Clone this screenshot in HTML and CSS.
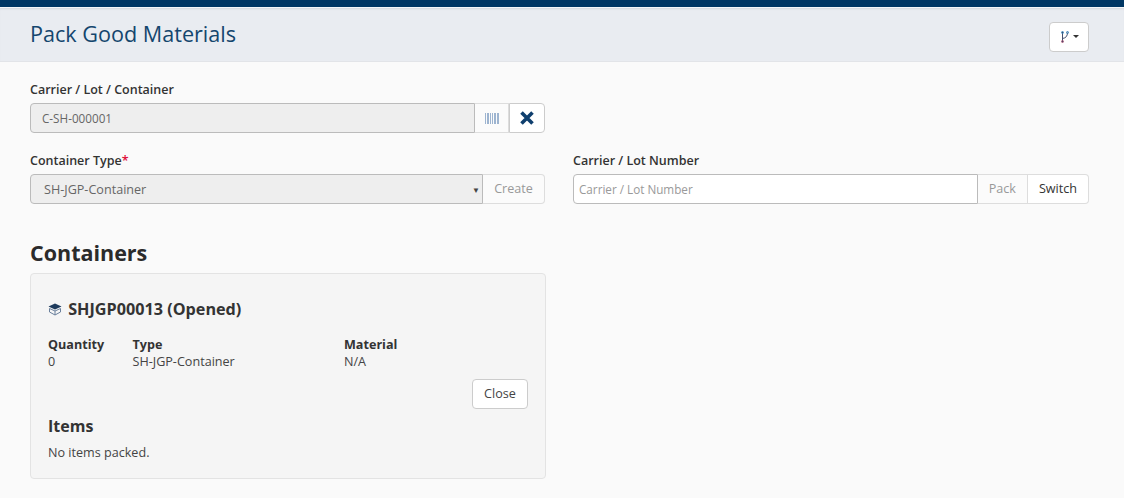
FILE: index.html
```html
<!DOCTYPE html>
<html lang="en">

<head>
  <meta charset="UTF-8">
  <title>Pack Good Materials</title>
  <link rel="stylesheet" href="styles.css">
</head>
<body>
  <div class="topbar"></div>

  <!-- Page header -->
  <div class="page-header">
    <h1>Pack Good Materials</h1>
    <button class="btn btn-menu" type="button">
      <svg width="9" height="12" viewBox="0 0 9 12" fill="none" stroke="#44506e" stroke-width="1">
        <path d="M1.5 1v10M1.5 7.5C5 7 6.5 5 6.5 1.5"/>
        <circle cx="1.5" cy="1.5" r="1" stroke="#2f7fb8"/>
        <circle cx="6.5" cy="1.5" r="1" stroke="#2f7fb8"/>
        <circle cx="1.5" cy="10.5" r="1" stroke="#a04a6c"/>
      </svg>
      <span class="caret"></span>
    </button>
  </div>

  <div class="content">
    <div class="field field-carrier">
      <label>Carrier / Lot / Container</label>
      <div class="input-group">
        <input class="input input-readonly" type="text" value="C-SH-000001" readonly>
        <span class="addon addon-scan">
          <svg width="14" height="11" viewBox="0 0 14 11" fill="#9db4d0">
            <rect x="0" width="1" height="11"/>
            <rect x="2" width="2" height="11"/>
            <rect x="5" width="1" height="11"/>
            <rect x="7" width="1" height="11"/>
            <rect x="9" width="2" height="11"/>
            <rect x="12" width="2" height="11"/>
          </svg>
        </span>
        <button class="addon addon-clear" type="button">
          <svg width="14" height="14" viewBox="0 0 14 14" stroke="#0f3f6e" stroke-width="3.6" fill="none">
            <path d="M1.5 1.5l11 11M12.5 1.5l-11 11"/>
          </svg>
        </button>
      </div>
    </div>

    <div class="form-row">
      <div class="field">
        <label>Container Type<span class="required">*</span></label>
        <div class="input-group">
          <div class="input input-readonly select">
            <span>SH-JGP-Container</span>
            <span class="select-arrow">▼</span>
          </div>
          <button class="addon addon-text addon-create muted" type="button">Create</button>
        </div>
      </div>
      <div class="field">
        <label>Carrier / Lot Number</label>
        <div class="input-group">
          <input class="input input-lot" type="text" placeholder="Carrier / Lot Number">
          <button class="addon addon-text muted" type="button">Pack</button>
          <button class="addon addon-text" type="button">Switch</button>
        </div>
      </div>
    </div>

    <h2>Containers</h2>

    <div class="card">
      <h3>
        <svg width="14" height="13" viewBox="0 0 14 13">
          <path d="M7 0.5L13.5 3.5L7 6.5L0.5 3.5Z" fill="#1d3a5c"/>
          <path d="M1.5 5.5L7 8L12.5 5.5V9L7 12L1.5 9Z" fill="none" stroke="#6a809c" stroke-width="1"/>
          <path d="M7 8V12" stroke="#6a809c" stroke-width="1"/>
        </svg>
        SHJGP00013 (Opened)
      </h3>
      <div class="details">
        <div class="detail detail-qty"><b>Quantity</b><span>0</span></div>
        <div class="detail detail-type"><b>Type</b><span>SH-JGP-Container</span></div>
        <div class="detail"><b>Material</b><span>N/A</span></div>
      </div>
      <div class="card-actions">
        <button class="btn btn-close" type="button">Close</button>
      </div>
      <h4>Items</h4>
      <p>No items packed.</p>
    </div>
  </div>
</body>
</html>
```

FILE: styles.css
```css
* {
  box-sizing: border-box;
}

body {
  font-family: "Open Sans", Arial, sans-serif;
  font-size: 12.6px;
  line-height: 18px;
  margin: 0;
  color: #444;
  background-color: #fafafa;
  overflow: hidden;
}

.topbar {
  height: 8px;
  background-color: #003764;
  border-bottom: 1px solid #f4f6f8;
}

.page-header {
  height: 54px;
  padding: 0 35px 0 30px;
  display: flex;
  align-items: center;
  justify-content: space-between;
  background-color: #e9ecf1;
  border-bottom: 1px solid #e2e4e8;
  box-shadow: inset 0 2px 2px -1px #d5d8de;
}

h1 {
  margin: 0 0 1px;
  font-size: 21.6px;
  line-height: 30px;
  font-weight: 400;
  color: #14466e;
}

.btn {
  font-family: inherit;
  font-size: 12.6px;
  background-color: #fff;
  border: 1px solid #ccc;
  border-radius: 4px;
  color: #444;
}

.btn-menu {
  width: 40px;
  height: 30px;
  margin-top: 4px;
  padding: 0 0 0 2px;
  display: flex;
  align-items: center;
  justify-content: center;
  gap: 3px;
}

.caret {
  border-top: 3px solid #333;
  border-left: 3px solid transparent;
  border-right: 3px solid transparent;
}

.content {
  padding: 18px 35px 0 30px;
}

label {
  display: block;
  padding-top: 1px;
  margin-bottom: 4px;
  font-size: 12.5px;
  font-weight: 600;
  color: #333;
}

.required {
  color: #e0103a;
}

.field-carrier {
  width: 515px;
  margin-bottom: 18px;
}

.form-row {
  display: grid;
  grid-template-columns: 515px 516px;
  column-gap: 28px;
}

.input-group {
  display: flex;
  height: 30px;
}

.input {
  flex: 1;
  min-width: 0;
  height: 30px;
  font-family: inherit;
  font-size: 11.7px;
  color: #666;
  border: 1px solid #bbb;
  border-radius: 4px 0 0 4px;
  outline: none;
}

.input-readonly {
  padding: 0 11px;
  background-color: #eee;
}

.select {
  padding: 1px 2px 0 13px;
  display: flex;
  align-items: center;
  justify-content: space-between;
  font-size: 12.6px;
}

.select-arrow {
  font-size: 8px;
  color: #444;
}

.input-lot {
  padding: 0 5px;
  background-color: #fff;
}

.input-lot::placeholder {
  color: #999;
  opacity: 1;
}

.addon {
  height: 30px;
  padding: 0;
  font-family: inherit;
  font-size: 12.6px;
  color: #333;
  background-color: #fff;
  border: 1px solid #ddd;
  border-left: 0;
  display: flex;
  align-items: center;
  justify-content: center;
}

.addon:last-child {
  border-radius: 0 4px 4px 0;
}

.addon-scan {
  width: 34px;
  background-color: #fbfbfb;
}

.addon-clear {
  width: 36px;
  border-left: 1px solid #ccc;
  border-color: #ccc;
}

.addon-text {
  padding: 0 11px 2px;
}

.addon-create {
  width: 62px;
  padding: 0 0 2px;
}

.muted {
  color: #999;
  background-color: #fbfbfb;
}

h2 {
  margin: 35px 0 6px;
  font-size: 21.5px;
  line-height: 28px;
  font-weight: 700;
  color: #2b2b2b;
}

.card {
  width: 516px;
  height: 206px;
  padding: 23px 17px 0;
  background-color: #f5f5f5;
  border: 1px solid #e3e3e3;
  border-radius: 4px;
}

h3 {
  margin: 0;
  font-size: 16.2px;
  line-height: 24px;
  font-weight: 700;
  color: #333;
}

h3 svg {
  margin-right: 2px;
  vertical-align: -1px;
}

.details {
  display: flex;
  margin-top: 15px;
}

.detail {
  display: flex;
  flex-direction: column;
  line-height: 17px;
}

.detail b {
  font-weight: 700;
  color: #333;
}

.detail-qty {
  width: 84.5px;
}

.detail-type {
  width: 211.5px;
}

.card-actions {
  display: flex;
  justify-content: flex-end;
  margin-top: 9px;
}

.btn-close {
  width: 56px;
  height: 30px;
  padding: 0 0 2px;
}

h4 {
  margin: 6px 0 0;
  font-size: 16px;
  line-height: 22px;
  font-weight: 700;
  color: #333;
}

p {
  margin: 7px 0 0;
}
```
